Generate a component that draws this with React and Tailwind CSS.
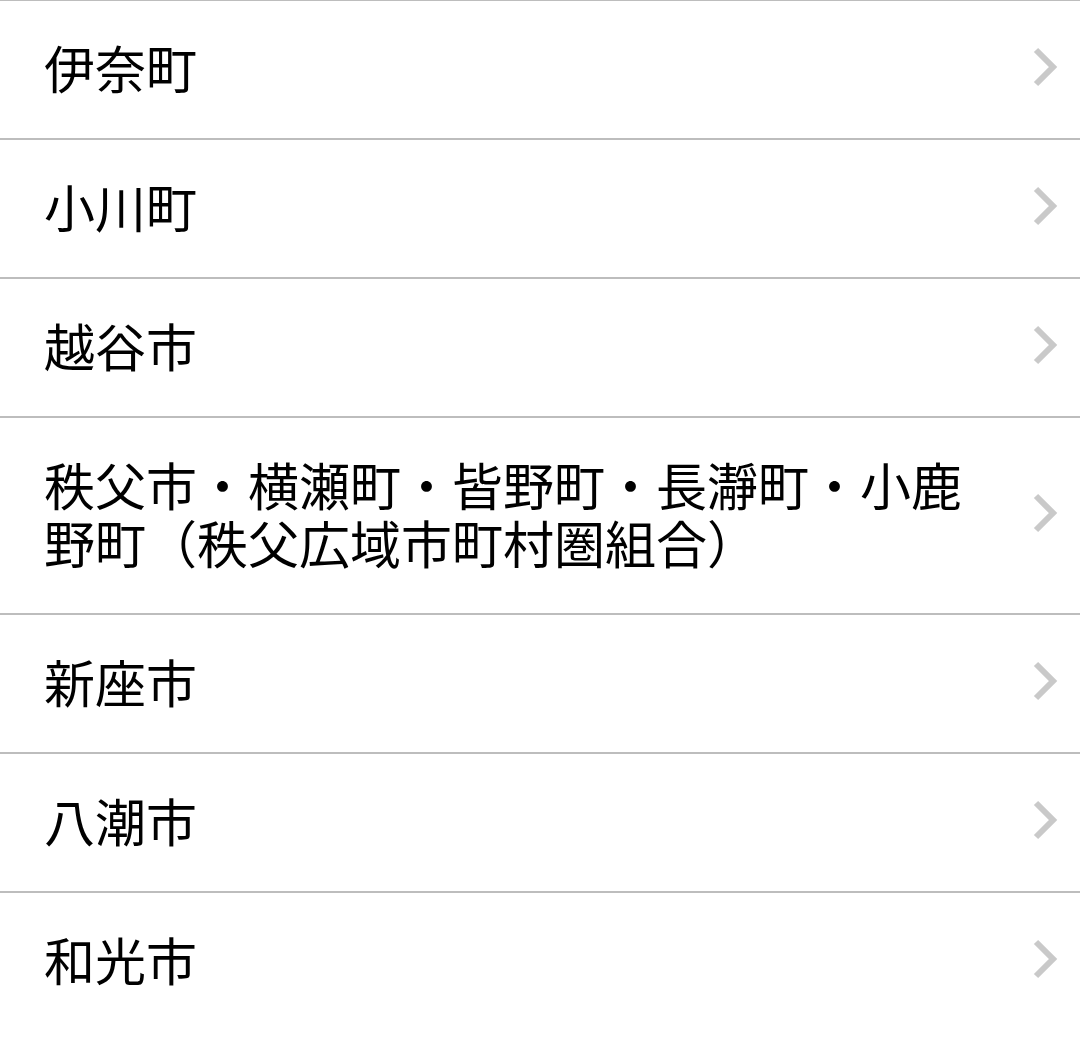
import React from "react";

const items = [
  "伊奈町",
  "小川町",
  "越谷市",
  "秩父市・横瀬町・皆野町・長瀞町・小鹿野町（秩父広域市町村圏組合）",
  "新座市",
  "八潮市",
  "和光市",
];

function Chevron() {
  return (
    <svg width="26" height="40" viewBox="0 0 26 40" className="shrink-0">
      <path
        d="M4 3 L21 20 L4 37"
        fill="none"
        stroke="#c9c9c9"
        strokeWidth="6"
        strokeLinejoin="miter"
      />
    </svg>
  );
}

export default function App() {
  return (
    <div
      className="w-[1080px] h-[1047px] overflow-hidden bg-white"
      style={{ fontFamily: '"Noto Sans CJK JP", "Noto Sans", sans-serif' }}
    >
      <div className="-mt-px border-t-2 border-[#bdbdbd]">
        {items.map((t, i) => (
          <div
            key={t}
            className={
              "flex items-center border-[#bdbdbd] pl-[44px] pr-[22px] pt-[37px] pb-[42px] " +
              (i < items.length - 1 ? "border-b-[2.5px]" : "")
            }
          >
            <div className="flex-1 min-w-0 pr-[60px] text-[51px] leading-[58px] text-black">
              {t}
            </div>
            <Chevron />
          </div>
        ))}
      </div>
    </div>
  );
}
